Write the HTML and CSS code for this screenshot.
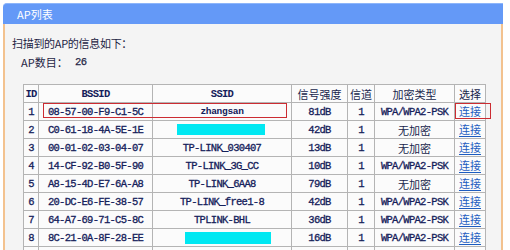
FILE: index.html
```html
<!DOCTYPE html>
<html lang="zh">
<head>
<meta charset="utf-8">
<title>AP列表</title>
<link rel="stylesheet" href="styles.css">
</head>
<body>
<div class="panel">
  <div class="panel-head">AP列表</div>
  <div class="panel-body">
    <div class="intro">扫描到的AP的信息如下：</div>
    <div class="count"><span class="count-label">AP数目：</span><span class="count-num">26</span></div>
    <div class="table-wrap">
      <table class="ap-table">
        <colgroup>
          <col class="c-id"><col class="c-bssid"><col class="c-ssid"><col class="c-sig"><col class="c-ch"><col class="c-enc"><col class="c-sel">
        </colgroup>
        <thead>
          <tr><th>ID</th><th>BSSID</th><th>SSID</th><th class="cjk">信号强度</th><th class="cjk">信道</th><th class="cjk">加密类型</th><th class="cjk">选择</th></tr>
        </thead>
        <tbody>
          <tr><td>1</td><td>08-57-00-F9-C1-5C</td><td class="small">zhangsan</td><td>81dB</td><td>1</td><td>WPA/WPA2-PSK</td><td><a class="link" href="#">连接</a></td></tr>
          <tr><td>2</td><td>C0-61-18-4A-5E-1E</td><td><span class="mask mask-a"></span></td><td>42dB</td><td>1</td><td class="cjk">无加密</td><td><a class="link" href="#">连接</a></td></tr>
          <tr><td>3</td><td>00-01-02-03-04-07</td><td>TP-LINK_030407</td><td>13dB</td><td>1</td><td class="cjk">无加密</td><td><a class="link" href="#">连接</a></td></tr>
          <tr><td>4</td><td>14-CF-92-B0-5F-90</td><td>TP-LINK_3G_CC</td><td>10dB</td><td>1</td><td>WPA/WPA2-PSK</td><td><a class="link" href="#">连接</a></td></tr>
          <tr><td>5</td><td>A8-15-4D-E7-6A-A8</td><td>TP-LINK_6AA8</td><td>79dB</td><td>1</td><td class="cjk">无加密</td><td><a class="link" href="#">连接</a></td></tr>
          <tr><td>6</td><td>20-DC-E6-FE-38-57</td><td>TP-LINK_free1-8</td><td>42dB</td><td>1</td><td>WPA/WPA2-PSK</td><td><a class="link" href="#">连接</a></td></tr>
          <tr><td>7</td><td>64-A7-69-71-C5-8C</td><td>TPLINK-BHL</td><td>36dB</td><td>1</td><td>WPA/WPA2-PSK</td><td><a class="link" href="#">连接</a></td></tr>
          <tr><td>8</td><td>8C-21-0A-8F-28-EE</td><td><span class="mask mask-b"></span></td><td>16dB</td><td>1</td><td>WPA/WPA2-PSK</td><td><a class="link" href="#">连接</a></td></tr>
          <tr><td></td><td></td><td></td><td></td><td></td><td></td><td></td></tr>
        </tbody>
      </table>
      <div class="mark mark-row"></div>
      <div class="mark mark-link"></div>
    </div>
  </div>
</div>
</body>
</html>
```
FILE: styles.css
```css
html, body {
  margin: 0;
  padding: 0;
  background: #ffffff;
}
body {
  height: 250px;
  overflow: hidden;
  font-family: "Noto Sans CJK SC", "Liberation Sans", sans-serif;
}
.panel {
  margin: 3px 0 0 3px;
  width: 500px;
}
.panel-head {
  height: 21px;
  line-height: 21px;
  background: #6499f7;
  border-top: 1px solid #8db5fa;
  box-sizing: border-box;
  border-radius: 4px 0 0 0;
  color: #ffffff;
  font-size: 11px;
  padding-left: 14px;
}
.panel-body {
  background: #f4f4f4;
  border-left: 2px solid #f3c28f;
  border-right: 2px solid #f3c28f;
  padding: 11px 0 40px 7px;
}
.intro {
  font-size: 11px;
  line-height: 16px;
  color: #1e1e44;
  letter-spacing: -0.3px;
}
.count {
  margin-top: 3px;
  padding-left: 9px;
  font-size: 11px;
  line-height: 16px;
  color: #1e1e44;
  display: flex;
}
.count-label {
  width: 54px;
}
.count-num {
  font-family: "Liberation Mono", monospace;
  font-size: 10.5px;
  letter-spacing: -0.6px;
  -webkit-text-stroke: 0.25px #1e1e44;
}
.table-wrap {
  position: relative;
  margin: 14px 0 0 11px;
  width: 463px;
}
.ap-table {
  border-collapse: collapse;
  table-layout: fixed;
  width: 463px;
  background: #fbfbfb;
  border: 1px solid #a8a8a8;
}
.c-id { width: 15px; }
.c-bssid { width: 114px; }
.c-ssid { width: 139px; }
.c-sig { width: 56px; }
.c-ch { width: 27px; }
.c-enc { width: 80px; }
.c-sel { width: 31px; }
.ap-table th,
.ap-table td {
  border: 1px solid #b4b4b4;
  height: 17px;
  padding: 0;
  line-height: 12px;
  vertical-align: middle;
  text-align: center;
  white-space: nowrap;
  overflow: hidden;
  font-family: "Liberation Mono", "Noto Sans CJK SC", monospace;
  font-size: 10.5px;
  letter-spacing: -0.7px;
  font-weight: normal;
  color: #14205a;
  -webkit-text-stroke: 0.3px #14205a;
}
.ap-table th {
  font-weight: bold;
  -webkit-text-stroke: 0;
}
.ap-table .cjk {
  font-family: "Noto Sans CJK SC", sans-serif;
  font-size: 11px;
  letter-spacing: 0;
  font-weight: normal;
  color: #181f4c;
  -webkit-text-stroke: 0;
}
.ap-table .small {
  font-size: 9.5px;
  font-weight: bold;
  letter-spacing: -0.3px;
  -webkit-text-stroke: 0;
}
.link {
  font-family: "Noto Sans CJK SC", sans-serif;
  font-size: 11px;
  line-height: 12px;
  letter-spacing: 0;
  color: #1d5cc0;
  text-decoration: underline;
  vertical-align: middle;
  -webkit-text-stroke: 0;
}
.mask {
  display: inline-block;
  height: 11px;
  background: #00e8f2;
  vertical-align: middle;
}
.mask-a { width: 88px; margin-right: 3px; }
.mask-b { width: 86px; height: 12px; margin-left: 12px; }
.mark {
  position: absolute;
  border: 1px solid #cc2c32;
  box-sizing: border-box;
}
.mark-row {
  left: 20px;
  top: 19px;
  width: 244px;
  height: 15px;
}
.mark-link {
  left: 432px;
  top: 19px;
  width: 36px;
  height: 16px;
}
```
